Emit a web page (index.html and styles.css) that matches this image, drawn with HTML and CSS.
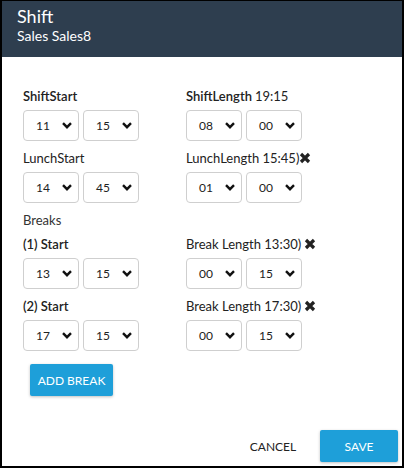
FILE: index.html
```html
<!DOCTYPE html>
<html>
<head>
<meta charset="utf-8">
<link rel="stylesheet" href="styles.css">
</head>
<body>
<div class="dialog">
  <header class="head">
    <div class="title">Shift</div>
    <div class="sub">Sales Sales8</div>
  </header>
  <main class="content">
    <div class="grid">
      <div class="field">
        <div class="lbl strong">ShiftStart</div>
        <div class="pair">
          <div class="sel"><span>11</span><svg class="chev" viewBox="0 0 10 7"><path d="M1 1.2L5 5.2L9 1.2"/></svg></div>
          <div class="sel"><span>15</span><svg class="chev" viewBox="0 0 10 7"><path d="M1 1.2L5 5.2L9 1.2"/></svg></div>
        </div>
      </div>
      <div class="field">
        <div class="lbl"><b>ShiftLength</b> 19:15</div>
        <div class="pair">
          <div class="sel"><span>08</span><svg class="chev" viewBox="0 0 10 7"><path d="M1 1.2L5 5.2L9 1.2"/></svg></div>
          <div class="sel"><span>00</span><svg class="chev" viewBox="0 0 10 7"><path d="M1 1.2L5 5.2L9 1.2"/></svg></div>
        </div>
      </div>
      <div class="field">
        <div class="lbl">LunchStart</div>
        <div class="pair">
          <div class="sel"><span>14</span><svg class="chev" viewBox="0 0 10 7"><path d="M1 1.2L5 5.2L9 1.2"/></svg></div>
          <div class="sel"><span>45</span><svg class="chev" viewBox="0 0 10 7"><path d="M1 1.2L5 5.2L9 1.2"/></svg></div>
        </div>
      </div>
      <div class="field">
        <div class="lbl">LunchLength 15:45)<svg class="x tight" viewBox="0 0 12 12"><path d="M2 2L10 10M10 2L2 10"/></svg></div>
        <div class="pair">
          <div class="sel"><span>01</span><svg class="chev" viewBox="0 0 10 7"><path d="M1 1.2L5 5.2L9 1.2"/></svg></div>
          <div class="sel"><span>00</span><svg class="chev" viewBox="0 0 10 7"><path d="M1 1.2L5 5.2L9 1.2"/></svg></div>
        </div>
      </div>
      <div class="lbl section">Breaks</div>
      <div class="field">
        <div class="lbl strong">(1) Start</div>
        <div class="pair">
          <div class="sel"><span>13</span><svg class="chev" viewBox="0 0 10 7"><path d="M1 1.2L5 5.2L9 1.2"/></svg></div>
          <div class="sel"><span>15</span><svg class="chev" viewBox="0 0 10 7"><path d="M1 1.2L5 5.2L9 1.2"/></svg></div>
        </div>
      </div>
      <div class="field">
        <div class="lbl">Break Length 13:30) <svg class="x" viewBox="0 0 12 12"><path d="M2 2L10 10M10 2L2 10"/></svg></div>
        <div class="pair">
          <div class="sel"><span>00</span><svg class="chev" viewBox="0 0 10 7"><path d="M1 1.2L5 5.2L9 1.2"/></svg></div>
          <div class="sel"><span>15</span><svg class="chev" viewBox="0 0 10 7"><path d="M1 1.2L5 5.2L9 1.2"/></svg></div>
        </div>
      </div>
      <div class="field">
        <div class="lbl strong">(2) Start</div>
        <div class="pair">
          <div class="sel"><span>17</span><svg class="chev" viewBox="0 0 10 7"><path d="M1 1.2L5 5.2L9 1.2"/></svg></div>
          <div class="sel"><span>15</span><svg class="chev" viewBox="0 0 10 7"><path d="M1 1.2L5 5.2L9 1.2"/></svg></div>
        </div>
      </div>
      <div class="field">
        <div class="lbl">Break Length 17:30) <svg class="x" viewBox="0 0 12 12"><path d="M2 2L10 10M10 2L2 10"/></svg></div>
        <div class="pair">
          <div class="sel"><span>00</span><svg class="chev" viewBox="0 0 10 7"><path d="M1 1.2L5 5.2L9 1.2"/></svg></div>
          <div class="sel"><span>15</span><svg class="chev" viewBox="0 0 10 7"><path d="M1 1.2L5 5.2L9 1.2"/></svg></div>
        </div>
      </div>
    </div>
    <button class="btn add">ADD BREAK</button>
  </main>
  <footer class="foot">
    <button class="btn flat">CANCEL</button>
    <button class="btn save">SAVE</button>
  </footer>
</div>
</body>
</html>
```
FILE: styles.css
```css
* { box-sizing: border-box; }
html, body { margin: 0; padding: 0; background: #fff; }
body { font-family: "Lato", "DejaVu Sans", sans-serif; color: #222; }
.dialog {
  width: 404px;
  height: 468px;
  border-style: solid;
  border-color: #000;
  border-width: 1px 2px 2px 2px;
  display: flex;
  flex-direction: column;
}
.head {
  background: #2e3e4f;
  color: #fff;
  height: 56px;
  padding: 4px 0 0 15px;
}
.title { font-size: 18px; line-height: 22px; }
.sub { font-size: 14px; line-height: 17px; }
.content { padding: 30px 0 0 21px; }
.grid {
  display: grid;
  grid-template-columns: 163px 1fr;
  row-gap: 8px;
}
.field { display: flex; flex-direction: column; gap: 5px; }
.lbl {
  font-size: 13px;
  line-height: 18px;
  display: flex;
  align-items: center;
  white-space: nowrap;
}
.lbl b { font-weight: 600; margin-right: 3px; }
.strong { font-weight: 600; }
.section { grid-column: 1 / -1; color: #333; margin-bottom: -2px; }
.pair { display: flex; gap: 4px; }
.sel {
  width: 56px;
  height: 31px;
  border: 1px solid #cfcfcf;
  border-radius: 4px;
  display: flex;
  align-items: center;
  padding: 0 6px 0 12px;
  font-size: 12px;
  justify-content: space-between;
}
.chev { width: 10px; height: 7px; fill: none; stroke: #111; stroke-width: 2.4; }
.x { width: 12px; height: 12px; margin-left: 3px; fill: none; stroke: #222; stroke-width: 3.2; }
.x.tight { margin-left: 0; }
.btn {
  font-family: "Lato", "DejaVu Sans", sans-serif;
  font-size: 12px;
  border: none;
  border-radius: 2px;
  cursor: pointer;
}
.add {
  margin: 13px 0 0 7px;
  width: 83px;
  height: 32px;
  background: #1e9fd9;
  color: #fff;
  padding: 0;
  box-shadow: 0 1px 3px rgba(0,0,0,0.25);
}
.foot {
  margin-top: auto;
  display: flex;
  justify-content: flex-end;
  gap: 8px;
  padding: 0 4px 4px 0;
}
.flat { background: transparent; color: #222; width: 78px; height: 32px; padding: 0; }
.save {
  background: #1e9fd9;
  color: #fff;
  width: 78px;
  height: 32px;
  padding: 0;
  box-shadow: 0 1px 3px rgba(0,0,0,0.25);
}
```
